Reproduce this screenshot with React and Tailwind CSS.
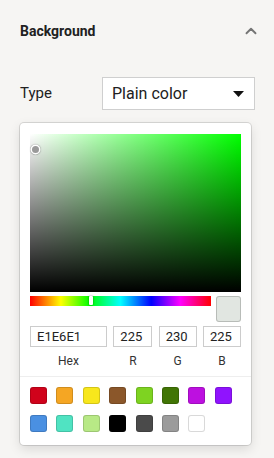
import { ChevronUp } from 'lucide-react'

const SWATCHES = [
  '#d0021b', '#f5a623', '#f8e71c', '#8b572a', '#7ed321', '#417505', '#bd10e0', '#9013fe',
  '#4a90e2', '#50e3c2', '#b8e986', '#000000', '#4a4a4a', '#9b9b9b', '#ffffff',
]

const hueGradient =
  'linear-gradient(to right, #ff0000 0%, #ffff00 17%, #00ff00 33%, #00ffff 50%, #0000ff 67%, #ff00ff 83%, #ff0000 100%)'

function ColorInput({ value, width }) {
  return (
    <div className={`${width} h-[21px] border border-[#cccccc] bg-white flex items-center pl-[6px] text-[13px] text-[#222] leading-none`}>
      {value}
    </div>
  )
}

export default function App() {
  return (
    <div className="w-[274px] h-[458px] bg-[#f6f5f3] font-['Roboto',sans-serif] text-[#212121] overflow-hidden">
      {/* Header */}
      <div className="flex items-center justify-between pl-5 pr-[14px] pt-[22px]">
        <h2 className="text-[14px] font-bold leading-[18px]">Background</h2>
        <ChevronUp className="w-[18px] h-[18px] text-[#757575]" strokeWidth={2.5} />
      </div>

      {/* Type row */}
      <div className="flex items-center pl-5 pr-[19px] mt-[37px]">
        <span className="text-[15px] w-[82px]">Type</span>
        <div className="flex-1 h-[33px] bg-white border border-[#cfcfcf] flex items-center justify-between pl-[9px] pr-[10px]">
          <span className="text-[16px]">Plain color</span>
          <svg width="11" height="6" viewBox="0 0 11 6"><path d="M0 0h11L5.5 6z" fill="#111" /></svg>
        </div>
      </div>

      {/* Picker card */}
      <div className="ml-5 mt-[13px] w-[231px] bg-white rounded-[4px] shadow-[0_0_0_1px_rgba(0,0,0,0.12),0_4px_12px_rgba(0,0,0,0.12)] pt-[11px]">
        <div className="px-[10px]">
          {/* Saturation */}
          <div className="relative w-[211px] h-[158px] bg-[#00ff00]">
            <div className="absolute inset-0 bg-[linear-gradient(to_right,#ffffff,rgba(255,255,255,0))]" />
            <div className="absolute inset-0 bg-[linear-gradient(to_top,#000000,rgba(0,0,0,0))]" />
            <div className="absolute left-[2px] top-[12px] w-[7px] h-[7px] rounded-full bg-[#9a9a9a] shadow-[0_0_0_1.5px_#fff,0_0_1px_2px_rgba(0,0,0,0.25)]" />
          </div>

          {/* Hue + preview */}
          <div className="flex gap-[5px] mt-[4px]">
            <div className="relative w-[181px] h-[10px]" style={{ background: hueGradient }}>
              <div className="absolute left-[59px] top-0 w-[4px] h-[9px] bg-white rounded-[1px] shadow-[0_0_2px_rgba(0,0,0,0.5)]" />
            </div>
            <div className="w-[25px] h-[26px] rounded-[3px] bg-[#e1e6e1] shadow-[inset_0_0_0_1px_rgba(0,0,0,0.18)]" />
          </div>

          {/* Inputs */}
          <div className="flex justify-between mt-[4px]">
            <ColorInput value="E1E6E1" width="w-[77px]" />
            <ColorInput value="225" width="w-[39px]" />
            <ColorInput value="230" width="w-[38px]" />
            <ColorInput value="225" width="w-[38px]" />
          </div>
          <div className="flex justify-between text-[12px] text-[#333] mt-[6px] leading-[16px]">
            <span className="w-[77px] text-center">Hex</span>
            <span className="w-[39px] text-center">R</span>
            <span className="w-[38px] text-center">G</span>
            <span className="w-[38px] text-center">B</span>
          </div>
        </div>

        {/* Swatches */}
        <div className="border-t border-[#eeeeee] mt-[7px] pl-[10px] pr-[10px] pt-[10px] pb-[13px] grid grid-cols-8 gap-y-[11px]">
          {SWATCHES.map((c) => (
            <div
              key={c}
              className="w-[17px] h-[17px] rounded-[3px] shadow-[inset_0_0_0_1px_rgba(0,0,0,0.15)]"
              style={{ backgroundColor: c }}
            />
          ))}
        </div>
      </div>
    </div>
  )
}
